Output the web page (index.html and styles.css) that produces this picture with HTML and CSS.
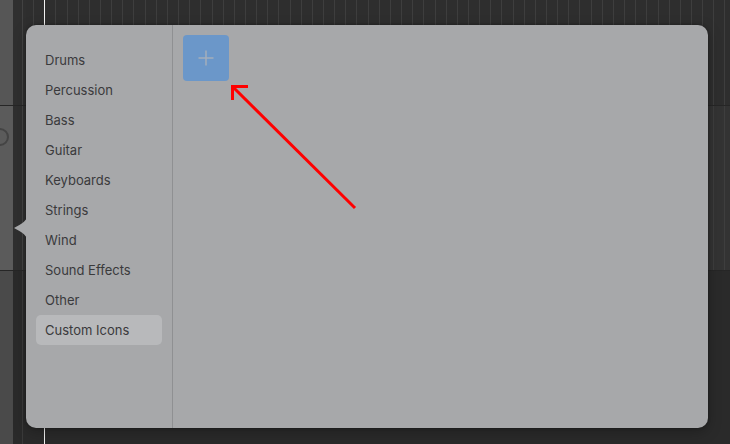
FILE: index.html
```html
<!DOCTYPE html>
<html>
<head>
<meta charset="utf-8">
<link rel="stylesheet" href="styles.css">
</head>
<body>
<div class="stage">
  <div class="band band-top">
    <div class="strip strip-top"></div>
    <div class="gutter"></div>
    <div class="grid"></div>
  </div>
  <div class="band band-mid">
    <div class="strip strip-mid"><span class="knob"></span></div>
    <div class="gutter"></div>
    <div class="grid"></div>
  </div>
  <div class="band band-bot">
    <div class="strip strip-bot"></div>
    <div class="gutter"></div>
    <div class="grid"></div>
  </div>

  <div class="playhead"></div>

  <div class="popover">
    <svg class="pointer" width="14" height="26" viewBox="0 0 14 26">
      <path d="M14 0 C13 5 9 8.5 0 13 C9 17.5 13 21 14 26 Z" fill="#a7a8aa"/>
    </svg>
    <nav class="sidebar">
      <div class="item">Drums</div>
      <div class="item">Percussion</div>
      <div class="item">Bass</div>
      <div class="item">Guitar</div>
      <div class="item">Keyboards</div>
      <div class="item">Strings</div>
      <div class="item">Wind</div>
      <div class="item">Sound Effects</div>
      <div class="item">Other</div>
      <div class="item selected">Custom Icons</div>
    </nav>
    <main class="content">
      <button class="add" type="button" aria-label="Add">
        <svg width="16" height="16" viewBox="0 0 16 16">
          <path d="M8 0.5 V15.5 M0.5 8 H15.5" stroke="#a4aebb" stroke-width="1.5" fill="none"/>
        </svg>
      </button>
    </main>
  </div>

  <svg class="annot" width="730" height="444" viewBox="0 0 730 444">
    <path d="M355 208 L233 87" stroke="#ff0000" stroke-width="3" fill="none" stroke-linecap="butt"/>
    <path d="M248 86.5 H232.5 V100" stroke="#ff0000" stroke-width="3" fill="none" stroke-linecap="butt" stroke-linejoin="miter"/>
  </svg>
</div>
</body>
</html>
```
FILE: styles.css
```css
html, body {
  margin: 0;
  padding: 0;
}
body {
  width: 730px;
  height: 444px;
  overflow: hidden;
  background: #2b2b2b;
  font-family: "Inter", "Liberation Sans", sans-serif;
}
.stage {
  position: relative;
  width: 730px;
  height: 444px;
  display: flex;
  flex-direction: column;
}
.band {
  display: flex;
}
.band-top { height: 105px; }
.band-mid { height: 164px; border-top: 1px solid #262626; }
.band-bot { flex: 1; border-top: 1px solid #262626; }

.strip { width: 13px; position: relative; overflow: hidden; }
.strip-top { background: #565656; }
.strip-mid { background: #5b5b5b; }
.strip-bot { background: #4a4a4a; }
.knob {
  position: absolute;
  left: -9px;
  top: 22px;
  width: 14px;
  height: 14px;
  border-radius: 50%;
  border: 2px solid #444;
}
.gutter {
  width: 13px;
  background: linear-gradient(90deg, #2f2f2f 0 9px, #424242 9px 10px, #2f2f2f 10px);
}
.band-bot .gutter { background: linear-gradient(90deg, #2a2a2a 0 9px, #3a3a3a 9px 10px, #2a2a2a 10px); }
.grid {
  flex: 1;
  background-color: #2e2e2e;
  background-image: repeating-linear-gradient(90deg, transparent 0 7.15px, #3e3e3e 7.15px 8.15px, transparent 8.15px 11.15px);
}
.band-mid .grid { background-color: #333333; }
.band-bot .grid { background-color: #2a2a2a; background-image: none; }

.playhead {
  position: absolute;
  left: 44px;
  top: 0;
  width: 1px;
  height: 444px;
  background: #f2f2f2;
}

.popover {
  position: absolute;
  left: 26px;
  top: 25px;
  width: 682px;
  height: 403px;
  background: #a7a8aa;
  border-radius: 10px;
  box-shadow: 0 0 3px rgba(0,0,0,0.35), 0 4px 14px rgba(0,0,0,0.25);
  display: flex;
}
.pointer {
  position: absolute;
  left: -12px;
  top: 190px;
}
.sidebar {
  width: 126px;
  padding: 20px 10px 0;
  border-right: 1px solid #8f9092;
  display: flex;
  flex-direction: column;
}
.item {
  height: 30px;
  line-height: 30px;
  padding-left: 9px;
  font-size: 13px;
  color: #3a3a3c;
  border-radius: 5px;
  white-space: nowrap;
}
.item.selected {
  background: #b8b9bb;
}
.content {
  flex: 1;
  padding: 10px;
}
.add {
  width: 46px;
  height: 46px;
  margin: 0;
  padding: 0;
  border: none;
  border-radius: 4px;
  background: #6b97c9;
  display: flex;
  align-items: center;
  justify-content: center;
}
.annot {
  position: absolute;
  left: 0;
  top: 0;
  pointer-events: none;
}
```
